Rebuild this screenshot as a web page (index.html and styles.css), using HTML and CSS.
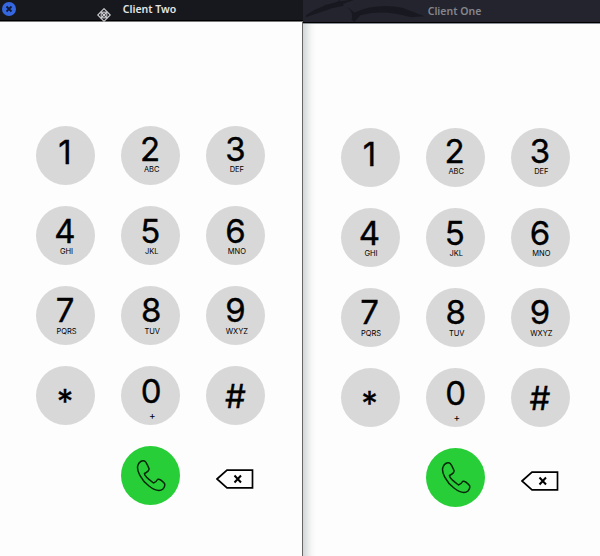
FILE: index.html
```html
<!DOCTYPE html>
<html lang="en">
<head>
<meta charset="utf-8">
<title>Dialer clients</title>
<link rel="stylesheet" href="styles.css">
</head>
<body>
<svg class="defs" width="0" height="0" aria-hidden="true">
  <symbol id="phone" viewBox="0 0 30 33">
    <path d="M2 6C3 3 6 1 8.500 2Q10 2.500 13 9.500Q13.500 12 8.500 14.500Q8 17 17.500 24Q20 23.500 21.500 20.500Q24 19.500 28.500 24.500Q29.500 27 27 30Q22 34 13 27C5 21 0 11 2 6Z"/>
  </symbol>
  <symbol id="erase" viewBox="0 0 38 20">
    <path d="M1 10L11 1.200H36.500V18.800H11Z"/>
    <path d="M18.500 6.500L25 13.500M25 6.500L18.500 13.500" stroke-width="2"/>
  </symbol>
</svg>
<main class="desktop">
  <section class="window active">
    <header class="bar">
      <svg class="close" viewBox="0 0 14 14"><circle cx="7" cy="7" r="7"/><path d="M4.500 4.500L9.500 9.500M9.500 4.500L4.500 9.500"/></svg>
      <span class="title">Client Two</span>
      <svg class="cursor" viewBox="0 0 14 14"><path d="M7 .7L13.300 7L7 13.300L.7 7Z"/><rect x="4.200" y="4.200" width="5.600" height="5.600"/><path d="M5 5L9 9M9 5L5 9"/></svg>
    </header>
    <div class="pad">
      <div class="key one"><b>1</b></div><div class="key"><b>2</b><small>ABC</small></div><div class="key"><b>3</b><small>DEF</small></div>
      <div class="key r2"><b>4</b><small>GHI</small></div><div class="key r2"><b>5</b><small>JKL</small></div><div class="key r2"><b>6</b><small>MNO</small></div>
      <div class="key r3"><b>7</b><small>PQRS</small></div><div class="key r3 mid"><b>8</b><small>TUV</small></div><div class="key r3"><b>9</b><small>WXYZ</small></div>
      <div class="key star"><b>*</b></div><div class="key zero mid"><b>0</b><small>+</small></div><div class="key hash"><b>#</b></div>
      <div class="key call"><svg><use href="#phone"/></svg></div><div class="erase"><svg><use href="#erase"/></svg></div>
    </div>
  </section>
  <section class="window idle">
    <header class="bar">
      <svg class="dragon" viewBox="0 0 130 23"><path d="M0 16Q18 3 45 0H50Q25 10 0 18ZM48 21Q50 13 43 7L51 13Q74 3 101 8L124 17L110 18Q80 9 57 16L51 23Z"/><path d="M18 5Q30 6 35 0L40 6L30 8Z"/></svg>
      <span class="title">Client One</span>
    </header>
    <div class="pad">
      <div class="key one"><b>1</b></div><div class="key"><b>2</b><small>ABC</small></div><div class="key"><b>3</b><small>DEF</small></div>
      <div class="key r2"><b>4</b><small>GHI</small></div><div class="key r2"><b>5</b><small>JKL</small></div><div class="key r2"><b>6</b><small>MNO</small></div>
      <div class="key r3"><b>7</b><small>PQRS</small></div><div class="key r3 mid"><b>8</b><small>TUV</small></div><div class="key r3"><b>9</b><small>WXYZ</small></div>
      <div class="key star"><b>*</b></div><div class="key zero mid"><b>0</b><small>+</small></div><div class="key hash"><b>#</b></div>
      <div class="key call"><svg><use href="#phone"/></svg></div><div class="erase"><svg><use href="#erase"/></svg></div>
    </div>
  </section>
</main>
</body>
</html>
```
FILE: styles.css
```css
* { box-sizing: border-box; }
body { margin: 0; background: #fdfdfd; color: #000; font-family: Inter, sans-serif; }
.defs { position: absolute; }
.desktop { display: grid; grid-template-columns: 303px 297px; height: 556px; overflow: hidden; }
.window { background: #fdfdfd; }
.active { border-right: 1px solid #666; }
.idle { background: linear-gradient(90deg, #d3d6d7 0, #e8eaea 5px, #f7f7f8 9px, #fdfdfd 13px); }
.bar { position: relative; display: flex; justify-content: center; height: 22px; background: #17181e; border-bottom: 1px solid #777; box-shadow: inset 0 -1px #000; }
.active .bar { margin-right: -1px; }
.idle .bar { height: 24px; background: #23242e; border-bottom-color: #8b8f98; }
.title { position: relative; font: 600 10.5px/15px "Noto Sans", sans-serif; color: #e4e4e6; margin-top: 2px; left: -2px; }
.idle .title { color: #85868d; margin-top: 4px; left: 3px; }
.close { position: absolute; left: 2px; top: 2px; width: 14px; height: 14px; fill: #3568e0; }
.close path { stroke: #111a38; stroke-width: 1.8; }
.cursor { position: absolute; left: 97px; top: 8px; width: 14px; height: 14px; fill: none; stroke: #d2d2d4; stroke-width: 1.1; }
.dragon { position: absolute; left: 0; top: 0; width: 130px; height: 22px; fill: #181920; }
.pad { display: grid; grid-template-columns: repeat(3, 59px); grid-auto-rows: 59px; gap: 21.2px 26.2px; padding: 103.7px 0 0 36px; }
.idle .pad { padding-left: 37.5px; }
.key { display: flex; flex-direction: column; align-items: center; border-radius: 50%; background: #d8d8d8; padding-top: 10.300px; }
.key b { font-weight: 400; font-size: 33px; line-height: 26px; margin-left: -1px; -webkit-text-stroke: .35px #000; }
.key small { font-size: 7.5px; line-height: 10px; margin: 3px 0 0 2px; }
.one { padding-top: 13px; }
.r2 { padding-top: 12px; }
.r2 small { margin-top: 3.300px; }
.r3 { padding-top: 11px; }
.r3 small { margin-top: 3.500px; }
.mid b { margin-left: 1px; }
.mid small { margin-left: 3px; }
.star { padding-top: 22px; }
.zero { padding-top: 12px; }
.zero small { font-size: 10px; margin-top: 5.500px; }
.hash { padding-top: 17px; }
.call { grid-column: 2; background: #27ce37; padding: 13px 0 0 1px; }
.call svg { width: 30px; height: 33px; fill: none; stroke: #07250a; stroke-width: 1.5; }
.erase { padding: 23px 0 0 10px; }
.erase svg { display: block; width: 38px; height: 20px; fill: none; stroke: #000; stroke-width: 1.7; }
```
